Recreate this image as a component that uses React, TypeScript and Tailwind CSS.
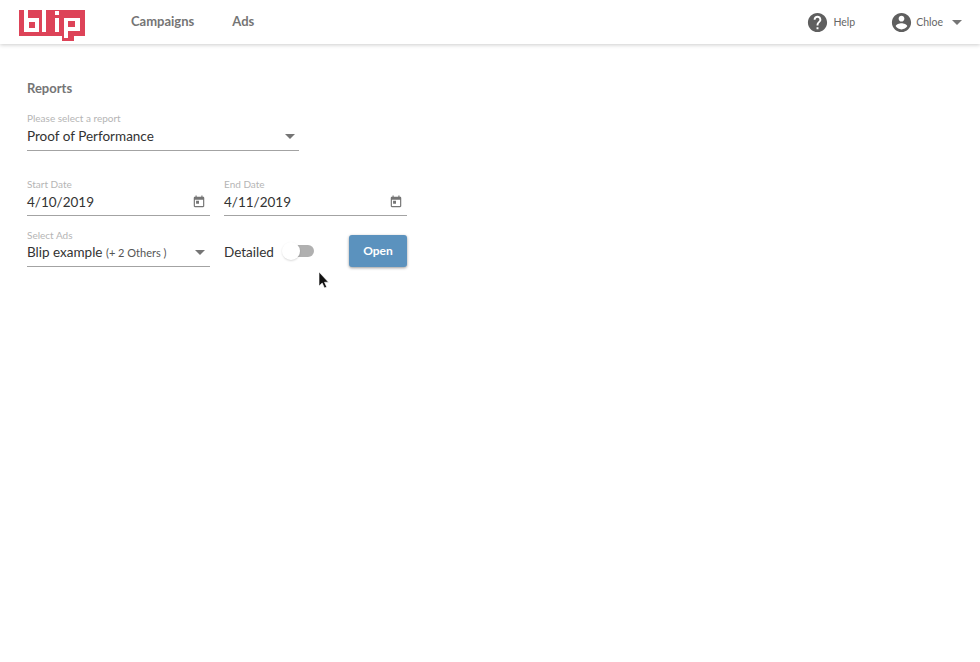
import { type ReactNode } from 'react';

function Logo() {
  return (
    <svg width="66" height="31" viewBox="0 0 66 31" className="block">
      <path d="M0 0H66V26H55V31H43V26H0Z" fill="#dd4358" />
      <path d="M5 0H9V8H20V22H5ZM10 12V18H16V12Z" fill="#fff" fillRule="evenodd" />
      <rect x="23" y="0" width="4" height="22" fill="#fff" />
      <rect x="36" y="1" width="4" height="4" fill="#fff" />
      <rect x="36" y="8" width="4" height="14" fill="#fff" />
      <path d="M45 8H61V21H49V28H45ZM49 11V17H56V11Z" fill="#fff" fillRule="evenodd" />
    </svg>
  );
}

function Caret({ className = '' }: { className?: string }) {
  return <span className={`w-0 h-0 border-x-[5px] border-x-transparent border-t-[5px] border-t-[#757575] ${className}`} />;
}

function CalendarIcon() {
  return (
    <svg width="14" height="14" viewBox="0 0 24 24" fill="#757575">
      <path d="M19 3h-1V1h-2v2H8V1H6v2H5c-1.100 0-2 .9-2 2v14c0 1.100.9 2 2 2h14c1.100 0 2-.9 2-2V5c0-1.100-.9-2-2-2zm0 16H5V8h14v11zM7 10h5v5H7z" />
    </svg>
  );
}

function Field({ label, width, box, children }: { label: string; width: string; box: string; children: ReactNode }) {
  return (
    <div className={`${width} flex flex-col`}>
      <span className="text-[10px] leading-[12px] text-[#b5b5b5]">{label}</span>
      <div className={`${box} mt-[1px] flex items-center justify-between border-b border-[#a3a3a3] text-[13.5px] text-[#333]`}>
        {children}
      </div>
    </div>
  );
}

export default function App() {
  return (
    <div className="min-h-[662px] w-full bg-white font-['Lato',sans-serif]">
      <header className="h-[44px] flex items-center pl-[19px] pr-[18px] bg-white shadow-[0_1px_4px_rgba(0,0,0,0.2)]">
        <div className="pt-[7px]"><Logo /></div>
        <nav className="ml-[46px] flex items-center gap-[38px] text-[13px] font-bold text-[#757575]">
          <span>Campaigns</span>
          <span>Ads</span>
        </nav>
        <div className="ml-auto flex items-center text-[#666]">
          <svg width="23" height="23" viewBox="0 0 24 24" fill="#5f5f5f">
            <path d="M12 2C6.480 2 2 6.480 2 12s4.480 10 10 10 10-4.480 10-10S17.520 2 12 2zm1 17h-2v-2h2v2zm2.070-7.750-.9.920C13.450 12.900 13 13.500 13 15h-2v-.5c0-1.100.45-2.100 1.170-2.830l1.240-1.260c.37-.36.59-.86.59-1.410 0-1.100-.9-2-2-2s-2 .9-2 2H8c0-2.210 1.790-4 4-4s4 1.790 4 4c0 .88-.36 1.680-.93 2.250z" />
          </svg>
          <span className="ml-[4px] mt-[2px] text-[10.5px]">Help</span>
          <svg className="ml-[35px]" width="23" height="23" viewBox="0 0 24 24" fill="#5f5f5f">
            <path d="M12 2C6.480 2 2 6.480 2 12s4.480 10 10 10 10-4.480 10-10S17.520 2 12 2zm0 3c1.660 0 3 1.340 3 3s-1.340 3-3 3-3-1.340-3-3 1.340-3 3-3zm0 14.200c-2.500 0-4.710-1.280-6-3.220.03-1.990 4-3.080 6-3.080 1.990 0 5.970 1.090 6 3.080-1.290 1.940-3.500 3.220-6 3.220z" />
          </svg>
          <span className="ml-[3px] mt-[2px] text-[10.5px]">Chloe</span>
          <Caret className="ml-[9px]" />
        </div>
      </header>

      <main className="pl-[27px] relative">
        <h1 className="pt-[37px] text-[13px] leading-[15px] font-bold text-[#757575]">Reports</h1>

        <div className="mt-[16px]">
          <Field label="Please select a report" width="w-[272px]" box="h-[26px] pb-[2px]">
            <span>Proof of Performance</span>
            <Caret className="mr-[4px]" />
          </Field>
        </div>

        <div className="mt-[27px] flex gap-[14px]">
          <Field label="Start Date" width="w-[183px]" box="h-[25px] pb-[2px]">
            <span>4/10/2019</span>
            <span className="mr-[4px] flex"><CalendarIcon /></span>
          </Field>
          <Field label="End Date" width="w-[183px]" box="h-[25px] pb-[2px]">
            <span>4/11/2019</span>
            <span className="mr-[4px] flex"><CalendarIcon /></span>
          </Field>
        </div>

        <div className="mt-[13px] flex items-start">
          <Field label="Select Ads" width="w-[183px]" box="h-[25px] pb-[3px]">
            <span>
              Blip example <span className="text-[11px] text-[#555]">(+ 2 Others )</span>
            </span>
            <Caret className="mr-[5px]" />
          </Field>
          <span className="ml-[14px] mt-[15px] text-[13.5px] leading-[17px] text-[#333]">Detailed</span>
          <div className="ml-[8px] mt-[12px] relative w-[32px] h-[20px] flex items-center">
            <div className="ml-[9px] w-[23px] h-[12px] rounded-full bg-[#b0b0b0]" />
            <div className="absolute left-0 top-[1px] w-[18px] h-[18px] rounded-full bg-white shadow-[0_1px_2px_rgba(0,0,0,0.15)]" />
          </div>
          <button className="ml-[35px] mt-[6px] w-[58px] h-[32px] rounded-[3px] bg-[#5b92be] text-white text-[12px] font-bold shadow-[0_1px_3px_rgba(0,0,0,0.4)]">
            Open
          </button>
        </div>

        <svg className="absolute left-[318px] top-[227px]" width="12" height="18" viewBox="0 0 12 18">
          <path d="M1 1v14l3.200-3 2.300 5 2.200-1-2.200-4.800H10.500Z" fill="#111" stroke="#fff" strokeWidth="0.6" />
        </svg>
      </main>
    </div>
  );
}
